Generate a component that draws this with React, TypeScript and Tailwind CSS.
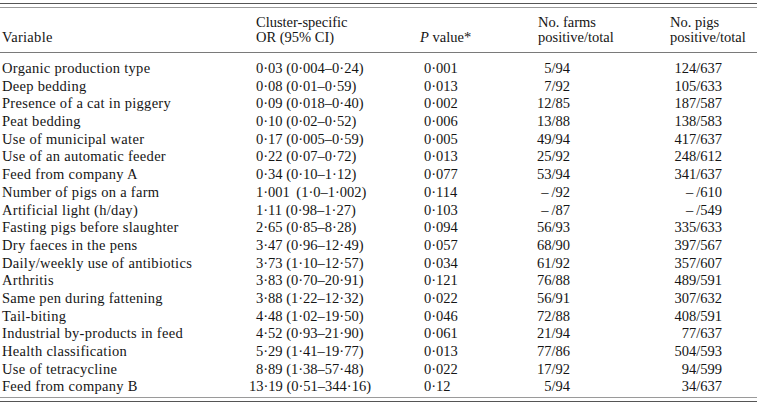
import React from "react";

type Row = {
  name: string;
  or: string;
  p: string;
  farms: string;
  pigs: string;
};

const rows: Row[] = [
  { name: "Organic production type", or: "0·03 (0·004–0·24)", p: "0·001", farms: "5/94", pigs: "124/637" },
  { name: "Deep bedding", or: "0·08 (0·01–0·59)", p: "0·013", farms: "7/92", pigs: "105/633" },
  { name: "Presence of a cat in piggery", or: "0·09 (0·018–0·40)", p: "0·002", farms: "12/85", pigs: "187/587" },
  { name: "Peat bedding", or: "0·10 (0·02–0·52)", p: "0·006", farms: "13/88", pigs: "138/583" },
  { name: "Use of municipal water", or: "0·17 (0·005–0·59)", p: "0·005", farms: "49/94", pigs: "417/637" },
  { name: "Use of an automatic feeder", or: "0·22 (0·07–0·72)", p: "0·013", farms: "25/92", pigs: "248/612" },
  { name: "Feed from company A", or: "0·34 (0·10–1·12)", p: "0·077", farms: "53/94", pigs: "341/637" },
  { name: "Number of pigs on a farm", or: "1·001 \u2009(1·0–1·002)", p: "0·114", farms: "–\u2009/92", pigs: "–\u2009/610" },
  { name: "Artificial light (h/day)", or: "1·11 (0·98–1·27)", p: "0·103", farms: "–\u2009/87", pigs: "–\u2009/549" },
  { name: "Fasting pigs before slaughter", or: "2·65 (0·85–8·28)", p: "0·094", farms: "56/93", pigs: "335/633" },
  { name: "Dry faeces in the pens", or: "3·47 (0·96–12·49)", p: "0·057", farms: "68/90", pigs: "397/567" },
  { name: "Daily/weekly use of antibiotics", or: "3·73 (1·10–12·57)", p: "0·034", farms: "61/92", pigs: "357/607" },
  { name: "Arthritis", or: "3·83 (0·70–20·91)", p: "0·121", farms: "76/88", pigs: "489/591" },
  { name: "Same pen during fattening", or: "3·88 (1·22–12·32)", p: "0·022", farms: "56/91", pigs: "307/632" },
  { name: "Tail-biting", or: "4·48 (1·02–19·50)", p: "0·046", farms: "72/88", pigs: "408/591" },
  { name: "Industrial by-products in feed", or: "4·52 (0·93–21·90)", p: "0·061", farms: "21/94", pigs: "77/637" },
  { name: "Health classification", or: "5·29 (1·41–19·77)", p: "0·013", farms: "77/86", pigs: "504/593" },
  { name: "Use of tetracycline", or: "8·89 (1·38–57·48)", p: "0·022", farms: "17/92", pigs: "94/599" },
  { name: "Feed from company B", or: "13·19 (0·51–344·16)", p: "0·12", farms: "5/94", pigs: "34/637" },
];

export default function App() {
  return (
    <div className="h-[403px] w-[757px] overflow-hidden bg-white font-['Liberation_Serif','Times_New_Roman',serif] text-[14.5px] text-[#151515]">
      {/* top double rule */}
      <div className="mt-[3px] h-px bg-[#555]" />
      <div className="mt-[3px] h-px bg-[#9a9a9a]" />

      {/* header */}
      <div className="flex pt-[6.5px] pb-[7.5px] leading-[15px] whitespace-nowrap">
        <div className="flex w-[256px] shrink-0 items-end pl-[2px] tracking-[0.3px]">Variable</div>
        <div className="w-[168px] shrink-0">
          <div>Cluster-specific</div>
          <div>OR (95% CI)</div>
        </div>
        <div className="flex w-[113px] shrink-0 items-end">
          <span className="-ml-[4px]">
            <i>P</i> value*
          </span>
        </div>
        <div className="w-[133px] shrink-0 pl-[1px]">
          <div>No. farms</div>
          <div>positive/total</div>
        </div>
        <div className="w-[87px] shrink-0">
          <div>No. pigs</div>
          <div>positive/total</div>
        </div>
      </div>
      <div className="h-px bg-[#7a7a7a]" />

      {/* body */}
      <div className="pt-[7px]">
        {rows.map((r) => (
          <div key={r.name} className="flex h-[17.7px] leading-[17.7px] whitespace-nowrap">
            <div className="w-[256px] shrink-0 pl-[2px] tracking-[0.3px]">{r.name}</div>
            <div className="w-[168px] shrink-0">
              <span className={r.or.startsWith("13") ? "-ml-[7px]" : ""}>{r.or}</span>
            </div>
            <div className="w-[113px] shrink-0">{r.p}</div>
            <div className="w-[133px] shrink-0">
              <div className="w-[33px] text-right">{r.farms}</div>
            </div>
            <div className="w-[87px] shrink-0">
              <div className="w-[52px] text-right">{r.pigs}</div>
            </div>
          </div>
        ))}
      </div>

      {/* bottom double rule */}
      <div className="mt-[1px] h-px bg-[#9a9a9a]" />
      <div className="mt-[3px] h-px bg-[#555]" />
    </div>
  );
}
